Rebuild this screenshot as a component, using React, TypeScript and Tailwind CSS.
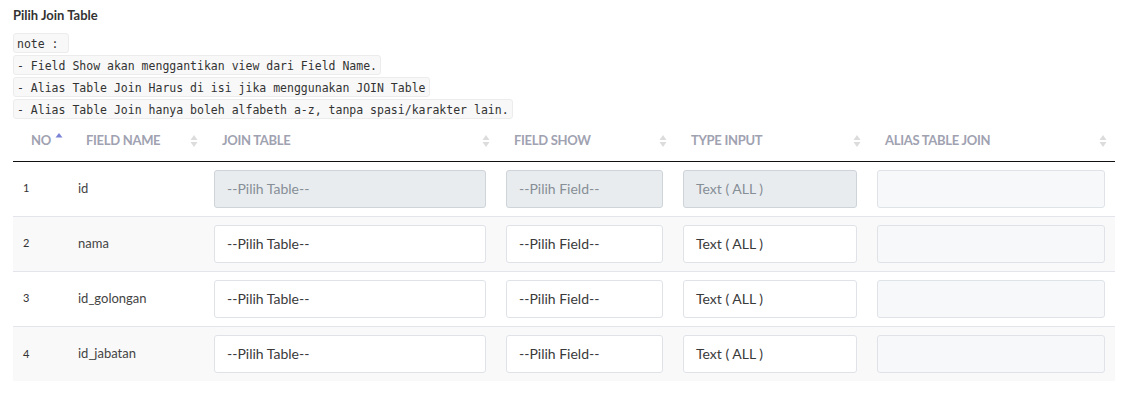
import React from "react";

const rows = [
  { no: 1, name: "id", disabled: true },
  { no: 2, name: "nama", disabled: false },
  { no: 3, name: "id_golongan", disabled: false },
  { no: 4, name: "id_jabatan", disabled: false },
];

const notes = [
  "note : ",
  "- Field Show akan menggantikan view dari Field Name.",
  "- Alias Table Join Harus di isi jika menggunakan JOIN Table",
  "- Alias Table Join hanya boleh alfabeth a-z, tanpa spasi/karakter lain.",
];

function SortIcon({ active }: { active?: boolean }) {
  if (active) {
    return (
      <svg width="8" height="12" viewBox="0 0 8 12" className="absolute left-[42px] top-[11px]">
        <path d="M4 1 L7.5 5.5 L0.5 5.5 Z" fill="#7b83d6" />
      </svg>
    );
  }
  return (
    <svg width="8" height="13" viewBox="0 0 8 13" className="absolute right-[8px] top-1/2 -translate-y-1/2">
      <path d="M4 0.5 L7.5 5.5 L0.5 5.5 Z" fill="#dcdcdc" />
      <path d="M4 12.5 L7.5 7.5 L0.5 7.5 Z" fill="#dcdcdc" />
    </svg>
  );
}

function Field({ text, disabled }: { text?: string; disabled?: boolean }) {
  const base = "h-[38px] w-full rounded-[3px] border px-3 flex items-center text-[14px]";
  if (text === undefined) {
    return <div className={base + " bg-[#f7f8fa] border-[#dfe3e8]"} />;
  }
  return (
    <div
      className={
        base +
        (disabled
          ? " bg-[#e9ecef] border-[#ced4da] text-[#868e96]"
          : " bg-white border-[#dfe3e8] text-[#3a3a3a]")
      }
    >
      {text}
    </div>
  );
}

export default function App() {
  const headers = [
    { label: "NO", pl: "pl-[18px]", active: true },
    { label: "FIELD NAME", pl: "pl-[18px]" },
    { label: "JOIN TABLE", pl: "pl-[16px]" },
    { label: "FIELD SHOW", pl: "pl-[16px]" },
    { label: "TYPE INPUT", pl: "pl-[16px]" },
    { label: "ALIAS TABLE JOIN", pl: "pl-[16px]" },
  ];

  return (
    <div className="w-[1128px] h-[402px] bg-white px-[13px] pt-[6px] font-['Lato','Noto_Sans',sans-serif] text-[#333]">
      <div className="text-[13px] leading-[18px] font-bold text-[#333]">Pilih Join Table</div>

      <div className="mt-[9px] flex flex-col items-start gap-[2px]">
        {notes.map((n) => (
          <code
            key={n}
            className="h-[20px] leading-[20px] px-[3px] rounded-[3px] border border-[#ececec] bg-[#f8f8f8] text-[11.5px] text-[#333] whitespace-pre font-['DejaVu_Sans_Mono','Liberation_Mono',monospace]"
          >
            {n}
          </code>
        ))}
      </div>

      <table className="mt-[2px] w-[1102px] table-fixed border-collapse">
        <colgroup>
          <col className="w-[55px]" />
          <col className="w-[138px]" />
          <col className="w-[292px]" />
          <col className="w-[177px]" />
          <col className="w-[194px]" />
          <col className="w-[246px]" />
        </colgroup>
        <thead>
          <tr className="border-b border-[#111]">
            {headers.map((h) => (
              <th
                key={h.label}
                className={
                  "relative h-[40px] text-left align-middle text-[13px] font-bold text-[#9fa2b1] tracking-[-0.3px] " +
                  h.pl
                }
              >
                {h.label}
                <SortIcon active={h.active} />
              </th>
            ))}
          </tr>
        </thead>
        <tbody>
          {rows.map((r, i) => (
            <tr
              key={r.no}
              className={
                "border-t border-[#e3e5ea] " + (i % 2 === 1 ? "bg-[#f9f9f9]" : "bg-white")
              }
            >
              <td className="h-[55px] pl-[10px] align-middle text-[11px] text-[#333]">{r.no}</td>
              <td className="pl-[10px] align-middle text-[13px] text-[#444]">{r.name}</td>
              <td className="pl-2 pr-3 align-middle">
                <Field text="--Pilih Table--" disabled={r.disabled} />
              </td>
              <td className="pl-2 pr-3 align-middle">
                <Field text="--Pilih Field--" disabled={r.disabled} />
              </td>
              <td className="pl-2 pr-3 align-middle">
                <Field text="Text ( ALL )" disabled={r.disabled} />
              </td>
              <td className="pl-2 pr-[10px] align-middle">
                <Field />
              </td>
            </tr>
          ))}
        </tbody>
      </table>
    </div>
  );
}
